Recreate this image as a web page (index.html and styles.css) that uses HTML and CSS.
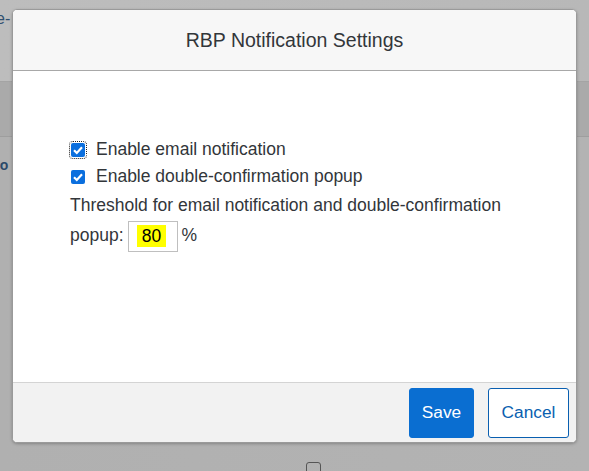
FILE: index.html
```html
<!DOCTYPE html>
<html>
<head>
<meta charset="utf-8">
<link rel="stylesheet" href="styles.css">
</head>
<body>
<div class="page">
  <div class="bg-top"><span class="bg-frag1">e-</span></div>
  <div class="bg-band"></div>
  <div class="bg-rest">
    <span class="bg-frag2">to</span>
    <span class="bg-check"></span>
  </div>
</div>
<div class="dialog">
  <header class="dlg-head">RBP Notification Settings</header>
  <section class="dlg-body">
    <label class="row">
      <span class="cb focus"><svg viewBox="0 0 14 14" width="14" height="14"><path d="M3 7.2 L5.8 10 L11 4.2" fill="none" stroke="#fff" stroke-width="2.2"/></svg></span>
      <span>Enable email notification</span>
    </label>
    <label class="row">
      <span class="cb"><svg viewBox="0 0 14 14" width="14" height="14"><path d="M3 7.2 L5.8 10 L11 4.2" fill="none" stroke="#fff" stroke-width="2.2"/></svg></span>
      <span>Enable double-confirmation popup</span>
    </label>
    <p class="thresh">Threshold for email notification and double-confirmation popup: <span class="inp"><mark>80</mark></span><span class="pct">%</span></p>
  </section>
  <footer class="dlg-foot">
    <button class="btn save">Save</button>
    <button class="btn cancel">Cancel</button>
  </footer>
</div>
</body>
</html>
```
FILE: styles.css
```css
html, body {
  margin: 0;
  padding: 0;
}
body {
  width: 589px;
  height: 471px;
  overflow: hidden;
  position: relative;
  font-family: "Liberation Sans", Arial, sans-serif;
  background: #b2b2b2;
}
.page {
  display: flex;
  flex-direction: column;
  height: 471px;
}
.bg-top {
  height: 81px;
  background: linear-gradient(90deg, #bdbdbd, #b8b8b8);
  border-bottom: 1px solid #a4a4a4;
  position: relative;
}
.bg-frag1 {
  position: absolute;
  left: -4px;
  top: 10px;
  font-size: 16px;
  color: #2f4f6f;
}
.bg-band {
  height: 54px;
  background: #aaaaaa;
  border-bottom: 1px solid #9e9e9e;
}
.bg-rest {
  flex: 1;
  background: linear-gradient(90deg, #b0b0b0, #b3b3b3);
  position: relative;
}
.bg-frag2 {
  position: absolute;
  left: -5px;
  top: 20px;
  font-size: 14px;
  font-weight: bold;
  color: #2c4a6a;
}
.bg-check {
  position: absolute;
  left: 306px;
  top: 325px;
  width: 13px;
  height: 13px;
  border: 1px solid #555;
  border-radius: 3px;
}
.dialog {
  position: absolute;
  left: 12px;
  top: 9px;
  width: 563px;
  height: 432px;
  border: 1px solid #9a9a9a;
  border-radius: 5px;
  background: #fff;
  box-shadow: 0 1px 3px rgba(0,0,0,0.25);
  display: flex;
  flex-direction: column;
  overflow: hidden;
}
.dlg-head {
  height: 61px;
  box-sizing: border-box;
  background: #f7f7f7;
  border-bottom: 1px solid #a8a8a8;
  display: flex;
  align-items: center;
  justify-content: center;
  font-size: 19.5px;
  color: #32363a;
  padding-top: 1px;
}
.dlg-body {
  flex: 1;
  padding: 65px 40px 0 57px;
  color: #32363a;
  font-size: 17.5px;
}
.row {
  display: flex;
  align-items: center;
  gap: 11px;
  height: 27px;
}
.cb {
  width: 14px;
  height: 14px;
  border-radius: 2px;
  background: #0b6fde;
  display: flex;
  flex-shrink: 0;
  margin-left: 1px;
}
.cb.focus {
  outline: 1px dotted #222;
  outline-offset: 1px;
}
.thresh {
  margin: 0;
  line-height: 30px;
}
.inp {
  display: inline-flex;
  align-items: center;
  justify-content: center;
  width: 47px;
  height: 29px;
  border: 1px solid #bfbfbf;
  vertical-align: middle;
  box-sizing: content-box;
  padding-right: 4px;
  box-sizing: border-box;
  width: 50px;
  height: 31px;
}
mark {
  background: #ffff00;
  color: #000;
  padding: 1px 5px;
  line-height: 20px;
}
.pct {
  margin-left: 3px;
}
.dlg-foot {
  height: 59px;
  background: #f2f2f2;
  border-top: 1px solid #d4d4d4;
  display: flex;
  justify-content: flex-end;
  align-items: center;
  gap: 14px;
  padding-right: 7px;
}
.btn {
  height: 50px;
  border-radius: 3px;
  font-family: "Liberation Sans", Arial, sans-serif;
  font-size: 17.3px;
  padding: 0;
  box-sizing: border-box;
}
.save {
  width: 65px;
  background: #0a6ed1;
  border: 1px solid #0a6ed1;
  color: #fff;
}
.cancel {
  width: 81px;
  background: #fff;
  border: 1px solid #0a5fb0;
  color: #0a5fb0;
}
```
